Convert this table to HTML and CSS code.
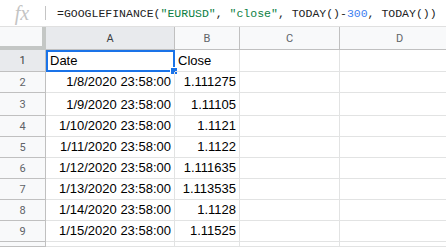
FILE: index.html
```html
<!DOCTYPE html>
<html>
<head>
<meta charset="utf-8">
<link rel="stylesheet" href="styles.css">
</head>
<body>
<div class="fbar">
  <div class="fx">fx</div>
  <div class="sep"></div>
  <div class="formula">=GOOGLEFINANCE(<span class="str">"EURUSD"</span>, <span class="str">"close"</span>, TODAY()-<span class="num">300</span>, TODAY())</div>
</div>
<div class="grid">
  <div class="corner"></div>
  <div class="ch sel">A</div>
  <div class="ch">B</div>
  <div class="ch">C</div>
  <div class="ch">D</div>

  <div class="rh sel">1</div>
  <div class="c l a1">Date<span class="handle"></span></div>
  <div class="c l">Close</div>
  <div class="c"></div>
  <div class="c"></div>

  <div class="rh">2</div>
  <div class="c">1/8/2020 23:58:00</div>
  <div class="c">1.111275</div>
  <div class="c"></div>
  <div class="c"></div>

  <div class="rh">3</div>
  <div class="c">1/9/2020 23:58:00</div>
  <div class="c">1.11105</div>
  <div class="c"></div>
  <div class="c"></div>

  <div class="rh">4</div>
  <div class="c">1/10/2020 23:58:00</div>
  <div class="c">1.1121</div>
  <div class="c"></div>
  <div class="c"></div>

  <div class="rh">5</div>
  <div class="c">1/11/2020 23:58:00</div>
  <div class="c">1.1122</div>
  <div class="c"></div>
  <div class="c"></div>

  <div class="rh">6</div>
  <div class="c">1/12/2020 23:58:00</div>
  <div class="c">1.111635</div>
  <div class="c"></div>
  <div class="c"></div>

  <div class="rh">7</div>
  <div class="c">1/13/2020 23:58:00</div>
  <div class="c">1.113535</div>
  <div class="c"></div>
  <div class="c"></div>

  <div class="rh">8</div>
  <div class="c">1/14/2020 23:58:00</div>
  <div class="c">1.1128</div>
  <div class="c"></div>
  <div class="c"></div>

  <div class="rh">9</div>
  <div class="c">1/15/2020 23:58:00</div>
  <div class="c">1.11525</div>
  <div class="c"></div>
  <div class="c"></div>

  <div class="rh"></div>
  <div class="c"></div>
  <div class="c"></div>
  <div class="c"></div>
  <div class="c"></div>
</div>
</body>
</html>
```
FILE: styles.css
```css
html, body {
  margin: 0;
  padding: 0;
  background: #fff;
  overflow: hidden;
  width: 446px;
  height: 247px;
}
body {
  font-family: "Liberation Sans", Arial, sans-serif;
}
.fbar {
  display: flex;
  align-items: center;
  height: 27px;
  border-bottom: 1px solid #e0e0e0;
  box-sizing: border-box;
}
.fx {
  width: 44px;
  text-align: center;
  font-family: "Liberation Serif", serif;
  font-style: italic;
  font-size: 20px;
  color: #c4c4c4;
  line-height: 27px;
  padding-right: 1px;
}
.sep {
  width: 1px;
  height: 14px;
  background: #c4c4c4;
}
.formula {
  padding-left: 11px;
  font-family: "Liberation Mono", monospace;
  font-size: 11.5px;
  color: #222;
  white-space: nowrap;
}
.str { color: #0b8043; }
.num { color: #3d7ef0; }

.grid {
  display: grid;
  grid-template-columns: 46px 129px 65px 100px 120px;
  grid-template-rows: 23px 22px 21px 23px 21px 21px 21px 21px 21px 21px 5px;
  height: 220px;
  overflow: hidden;
}
.corner {
  background: #f8f9fa;
  border-right: 4px solid #c4c7c5;
  border-bottom: 4px solid #c4c7c5;
  box-sizing: border-box;
}
.ch, .rh {
  background: #f8f9fa;
  border-right: 1px solid #c0c0c0;
  border-bottom: 1px solid #c0c0c0;
  box-sizing: border-box;
  display: flex;
  align-items: center;
  justify-content: center;
  font-family: Roboto, "Liberation Sans", sans-serif;
  font-size: 11px;
  color: #5f6368;
}
.sel {
  background: #e8eaed;
  color: #3c4043;
}
.c {
  border-right: 1px solid #e2e3e3;
  border-bottom: 1px solid #e2e3e3;
  box-sizing: border-box;
  font-size: 13px;
  color: #000;
  display: flex;
  align-items: flex-end;
  justify-content: flex-end;
  padding: 0 3px 3px;
  line-height: 15px;
  white-space: nowrap;
  position: relative;
}
.c.l { justify-content: flex-start; }
.a1 {
  border: 2px solid #1a73e8;
  padding: 0 2px 2px;
}
.handle {
  position: absolute;
  right: -5px;
  bottom: -5px;
  width: 6px;
  height: 6px;
  background: #1a73e8;
  border: 1px solid #fff;
}
```
